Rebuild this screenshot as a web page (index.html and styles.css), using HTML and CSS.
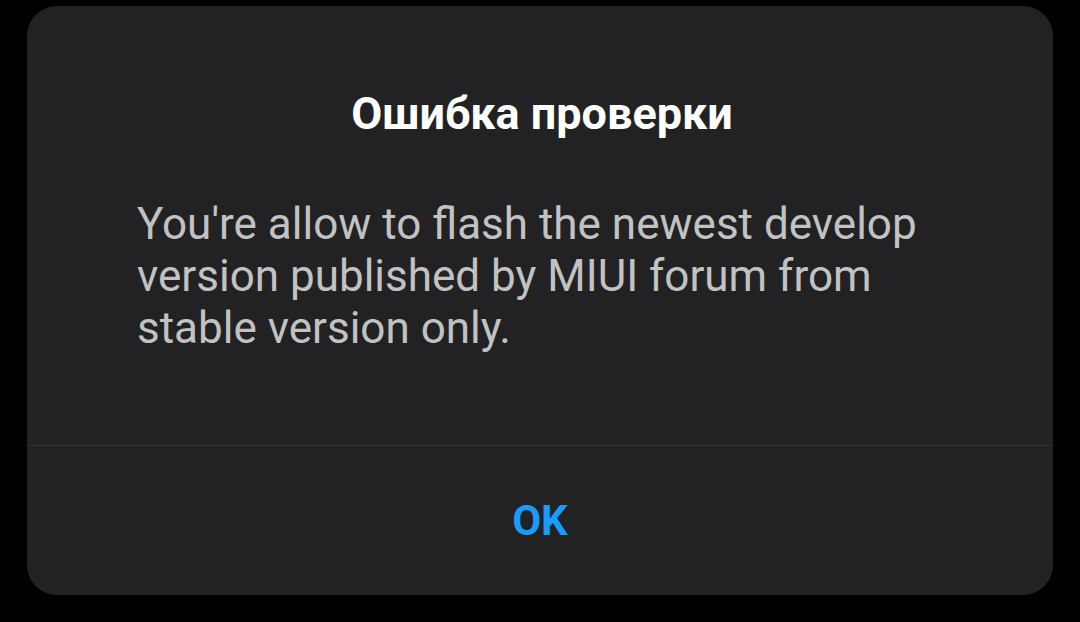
FILE: index.html
```html
<!DOCTYPE html>
<html>
<head>
  <title>Ошибка проверки</title>
  <link rel="stylesheet" href="styles.css">
</head>
<body>
  <div class="dialog">
    <div class="dialog-content">
      <h1 class="dialog-title">Ошибка проверки</h1>
      <p class="dialog-message">You're allow to flash the newest develop version published by MIUI forum from stable version only.</p>
    </div>
    <div class="dialog-actions">
      <button class="dialog-button">OK</button>
    </div>
  </div>
</body>
</html>
```

FILE: styles.css
```css
body {
  margin: 0;
  background-color: #000;
  font-family: Roboto, "Noto Sans", sans-serif;
}

.dialog {
  margin: 6px 27px 0 27px;
  height: 589px;
  background-color: #222224;
  border-radius: 30px;
  display: flex;
  flex-direction: column;
  overflow: hidden;
}

.dialog-content {
  height: 440px;
  box-sizing: border-box;
  padding: 82px 106px 0 110px;
  border-bottom: 1px solid #343436;
}

.dialog-title {
  margin: 0;
  text-align: center;
  font-size: 45px;
  font-weight: bold;
  color: #fff;
  line-height: 52px;
}

.dialog-message {
  margin: 58px 0 0 0;
  font-size: 44px;
  line-height: 52px;
  color: #c2c2c2;
}

.dialog-actions {
  flex: 1;
  display: flex;
  align-items: center;
  justify-content: center;
}

.dialog-button {
  background: none;
  border: none;
  padding: 0;
  font-family: Roboto, "Noto Sans", sans-serif;
  font-size: 42px;
  font-weight: bold;
  color: #1a9bf7;
  cursor: pointer;
}
```
